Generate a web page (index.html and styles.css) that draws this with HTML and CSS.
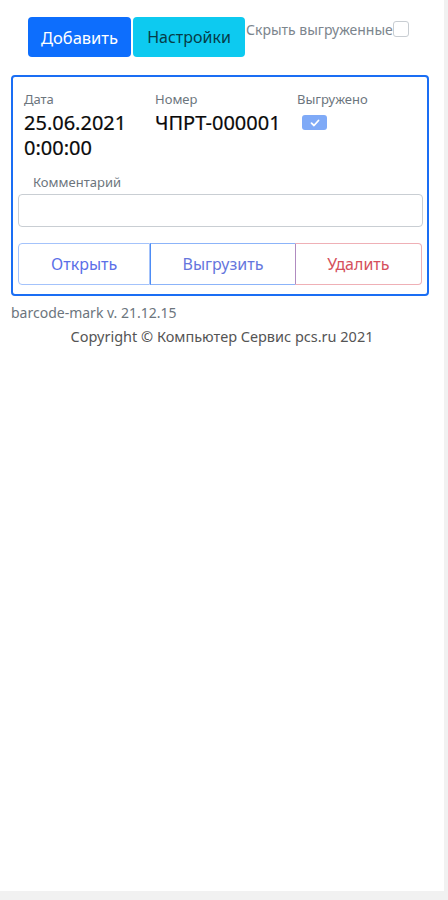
FILE: index.html
```html
<!DOCTYPE html>
<html>
<head>
	<meta charset="utf-8">
	<title>barcode-mark</title>
	<link rel="stylesheet" href="styles.css">
</head>
<body>
	<div class="page">
		<div class="toolbar">
			<button class="btn btn-primary">Добавить</button>
			<button class="btn btn-info">Настройки</button>
			<label class="hide-check">
				<span>Скрыть выгруженные</span>
				<span class="box"></span>
			</label>
		</div>

		<div class="card">
			<div class="fields">
				<div class="field f-date">
					<div class="caption">Дата</div>
					<div class="value">25.06.2021<br>0:00:00</div>
				</div>
				<div class="field f-num">
					<div class="caption">Номер</div>
					<div class="value">ЧПРТ-000001</div>
				</div>
				<div class="field f-done">
					<div class="caption">Выгружено</div>
					<span class="checked">
						<svg width="10" height="8" viewBox="0 0 10 8"><path d="M1.5 4.2 L4 6.5 L8.5 1.5" fill="none" stroke="#fff" stroke-width="1.8" stroke-linecap="round" stroke-linejoin="round"/></svg>
					</span>
				</div>
			</div>

			<div class="comment">
				<div class="caption">Комментарий</div>
				<input type="text" class="input">
			</div>

			<div class="btn-group">
				<button class="obtn o-open">Открыть</button>
				<button class="obtn o-upload">Выгрузить</button>
				<button class="obtn o-delete">Удалить</button>
			</div>
		</div>

		<div class="version">barcode-mark v. 21.12.15</div>
		<div class="copyright">Copyright © Компьютер Сервис pcs.ru 2021</div>
	</div>
</body>
</html>
```

FILE: styles.css
```css
html {
	background: #f1f1f1;
}

body {
	margin: 0;
	padding: 0;
	font-family: "Noto Sans", "Open Sans", sans-serif;
	color: #212529;
}

.page {
	width: 444px;
	height: 891px;
	background: #fff;
	box-sizing: border-box;
	padding: 17px 0 0 11px;
}

.toolbar {
	display: flex;
	align-items: flex-start;
	padding-left: 17px;
}

.btn {
	font-family: inherit;
	font-size: 16px;
	height: 40px;
	border: 0;
	border-radius: 4px;
	padding: 0 10px;
}

.btn-primary {
	background: #0d6efd;
	color: #fff;
	width: 103px;
	font-size: 16.5px;
}

.btn-info {
	background: #0dcaf0;
	color: #063c48;
	width: 112px;
	margin-left: 2px;
}

.hide-check {
	display: flex;
	align-items: flex-start;
	font-size: 14px;
	color: #7c858d;
	margin-left: 1px;
	padding-top: 3px;
}

.hide-check .box {
	width: 14px;
	height: 14px;
	border: 1px solid #c8cdd2;
	border-radius: 3px;
	margin-top: 1px;
}

.card {
	width: 418px;
	height: 221px;
	box-sizing: border-box;
	margin-top: 18px;
	border: 2px solid #1a6ef4;
	border-radius: 4px;
	padding: 14px 5px 0 5px;
}

.fields {
	display: flex;
	padding-left: 6px;
}

.caption {
	font-size: 13px;
	color: #6c757d;
	line-height: 16px;
}

.value {
	font-size: 20px;
	line-height: 25px;
	margin-top: 3px;
	color: #0a0a0a;
	-webkit-text-stroke: 0.2px #0a0a0a;
}

.f-date { width: 131px; }
.f-num { width: 142px; }

.checked {
	display: flex;
	align-items: center;
	justify-content: center;
	width: 25px;
	height: 15px;
	margin: 8px 0 0 5px;
	background: #7faaf7;
	border-radius: 3px;
}

.comment {
	margin-top: 14px;
}

.comment .caption {
	padding-left: 15px;
	font-size: 13px;
}

.input {
	display: block;
	width: 405px;
	height: 33px;
	box-sizing: border-box;
	margin-top: 4px;
	border: 1px solid #c9ced3;
	border-radius: 4px;
	outline: none;
}

.btn-group {
	display: flex;
	margin-top: 16px;
}

.obtn {
	font-family: inherit;
	font-size: 16px;
	height: 42px;
	background: #fff;
	border: 1px solid;
	padding: 0;
}

.o-open {
	width: 133px;
	color: #5b6fe8;
	border-color: #a4c3fb;
	border-radius: 4px 0 0 4px;
}

.o-upload {
	width: 145px;
	color: #6576dd;
	border-color: #8cb4f9;
	border-left-color: #4d8cf5;
	border-right: 0;
}

.o-delete {
	width: 128px;
	color: #d5505c;
	border-color: #efb0b6;
	border-left-color: #b08bc0;
	border-radius: 0 4px 4px 0;
}

.o-open + .o-upload {
	border-left: 1px solid #4d8cf5;
}

.version {
	font-size: 14px;
	color: #6c757d;
	margin-top: 8px;
	line-height: 18px;
}

.copyright {
	font-size: 14.5px;
	color: #555;
	text-align: center;
	margin: 5px 0 0 -11px;
	line-height: 18px;
}
```
